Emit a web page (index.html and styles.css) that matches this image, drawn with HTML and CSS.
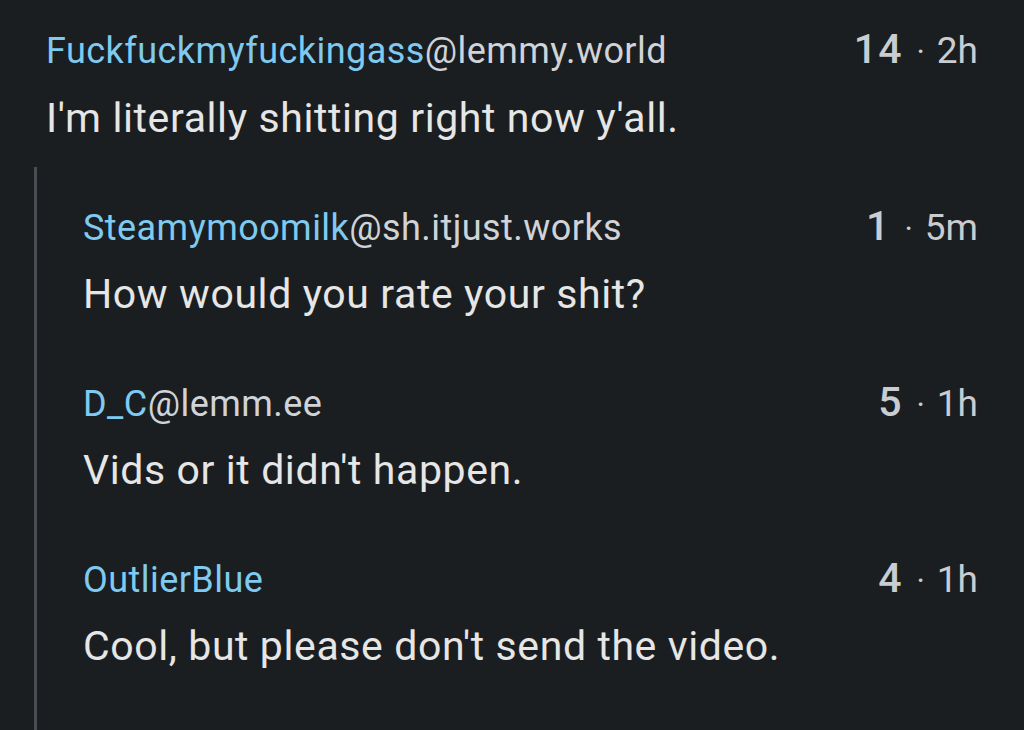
FILE: index.html
```html
<!DOCTYPE html>
<html>
<head>
<meta charset="utf-8">
<link rel="stylesheet" href="styles.css">
</head>
<body>
<div class="thread">
  <div class="comment top">
    <div class="head">
      <div class="author"><span class="name">Fuckfuckmyfuckingass</span><span class="inst">@lemmy.world</span></div>
      <div class="meta"><span class="score">14</span><span class="dot">·</span><span class="time">2h</span></div>
    </div>
    <div class="body">I'm literally shitting right now y'all.</div>
  </div>
  <div class="children">
    <div class="comment">
      <div class="head">
        <div class="author"><span class="name">Steamymoomilk</span><span class="inst">@sh.itjust.works</span></div>
        <div class="meta"><span class="score">1</span><span class="dot">·</span><span class="time">5m</span></div>
      </div>
      <div class="body">How would you rate your shit?</div>
    </div>
    <div class="comment">
      <div class="head">
        <div class="author"><span class="name">D_C</span><span class="inst">@lemm.ee</span></div>
        <div class="meta"><span class="score">5</span><span class="dot">·</span><span class="time">1h</span></div>
      </div>
      <div class="body">Vids or it didn't happen.</div>
    </div>
    <div class="comment">
      <div class="head">
        <div class="author"><span class="name">OutlierBlue</span></div>
        <div class="meta"><span class="score">4</span><span class="dot">·</span><span class="time">1h</span></div>
      </div>
      <div class="body">Cool, but please don't send the video.</div>
    </div>
  </div>
</div>
</body>
</html>
```
FILE: styles.css
```css
html, body {
  margin: 0;
  padding: 0;
  background: #1b1e21;
  width: 1024px;
  height: 730px;
  overflow: hidden;
  font-family: Roboto, "Noto Sans", sans-serif;
}
.thread {
  padding: 24px 46px 0 46px;
}
.comment .head {
  display: flex;
  justify-content: space-between;
  align-items: baseline;
  height: 50px;
  font-size: 36px;
  line-height: 50px;
}
.author { letter-spacing: 0.45px; }
.name { color: #7ecaf0; }
.inst { color: #d0d3d7; }
.meta { color: #c9cdd1; white-space: nowrap; }
.score { font-weight: 500; font-size: 41px; letter-spacing: 1px; }
.dot { margin: 0 12px 0 14px; font-size: 32px; }
.time { font-size: 37px; }
.body {
  color: #e6e6e6;
  font-size: 41px;
  letter-spacing: 0.6px;
  line-height: 60px;
  margin-top: 14px;
}
.children .body { margin-top: 13px; }
.children {
  box-sizing: border-box;
  margin-top: 19px;
  margin-left: -12px;
  border-left: 3px solid #4a4d52;
  padding-left: 46px;
  padding-top: 34px;
  height: 563px;
}
.children .comment + .comment {
  margin-top: 53px;
}
```
